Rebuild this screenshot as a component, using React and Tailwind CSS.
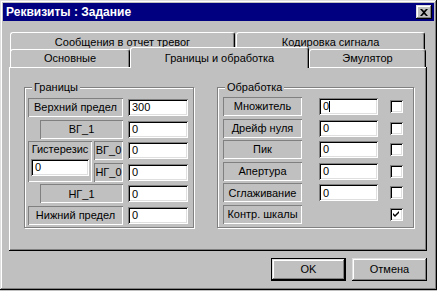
import React from "react";

const FONT = { fontFamily: '"Liberation Sans", Arial, sans-serif' };

const RAISED =
  "shadow-[inset_-1px_-1px_#000,inset_1px_1px_#dfdfdf,inset_-2px_-2px_#808080,inset_2px_2px_#fff]";
const FIELD =
  "shadow-[inset_1px_1px_#808080,inset_-1px_-1px_#fff,inset_2px_2px_#000,inset_-2px_-2px_#dfdfdf]";
const STATIC = "shadow-[inset_1px_1px_#808080,inset_-1px_-1px_#fff]";

function Label({ w, children }) {
  return (
    <div
      className={`${STATIC} h-[19px] shrink-0 flex items-center justify-center text-[11px] text-black`}
      style={{ width: w }}
    >
      {children}
    </div>
  );
}

function Field({ w = 60, value, caret }) {
  return (
    <div
      className={`${FIELD} h-[17px] shrink-0 bg-white flex items-center pl-[4px] text-[11px] text-black`}
      style={{ width: w }}
    >
      {value}
      {caret && <span className="inline-block w-px h-[11px] bg-black" />}
    </div>
  );
}

function Check({ on }) {
  return (
    <div className={`${FIELD} w-[13px] h-[13px] shrink-0 bg-white flex items-center justify-center`}>
      {on && (
        <svg width="7" height="7" viewBox="0 0 7 7">
          <path d="M0 2 L2 4 L6 0 L6 2 L2 6 L0 4 Z" fill="#000" />
        </svg>
      )}
    </div>
  );
}

function Group({ title, w, pl, children }) {
  return (
    <div
      className="relative h-[141px] border border-[#808080] shadow-[inset_1px_1px_#fff,1px_1px_#fff]"
      style={{ width: w, paddingLeft: pl }}
    >
      <span className="absolute -top-[7px] left-[7px] bg-[#c0c0c0] px-[2px] text-[11px] leading-[13px] text-black">
        {title}
      </span>
      {children}
    </div>
  );
}

function Tab({ w, h = 18, children, active }) {
  return (
    <div
      className={`shrink-0 border-t border-l border-white border-r border-r-black rounded-t-[3px] shadow-[inset_-1px_0_#808080] bg-[#c0c0c0] flex items-center justify-center text-[11px] text-black ${
        active ? "relative top-[1px] z-10" : ""
      }`}
      style={{ width: w, height: h }}
    >
      {children}
    </div>
  );
}

const rightRows = [
  ["Множитель", true],
  ["Дрейф нуля"],
  ["Пик"],
  ["Апертура"],
  ["Сглаживание"],
];

export default function App() {
  return (
    <div style={FONT} className="w-[437px] h-[291px] bg-[#c0c0c0] overflow-hidden">
      <div className={`${RAISED} w-[437px] h-[290px] p-[3px] flex flex-col`}>
        <div className="h-[18px] bg-[#000080] flex items-center justify-between pl-[3px] pr-[2px]">
          <span className="text-white font-bold text-[12px]">Реквизиты : Задание</span>
          <div className={`${RAISED} w-[16px] h-[14px] bg-[#c0c0c0] flex items-center justify-center`}>
            <svg width="8" height="7" viewBox="0 0 8 7">
              <path d="M0 0h2l2 2 2-2h2L5 3.5 8 7H6L4 5 2 7H0l3-3.5z" fill="#000" />
            </svg>
          </div>
        </div>

        <div className="pl-[6px] pr-[7px] mt-[11px] flex flex-col">
          <div className="flex gap-px pl-px">
            <Tab w={225} h={19}>Сообщения в отчет тревог</Tab>
            <Tab w={189} h={19}>Кодировка сигнала</Tab>
          </div>
          <div className="flex items-end h-[20px] -mt-[4px] pl-px">
            <Tab w={120}>Основные</Tab>
            <Tab w={179} h={21} active>
              Границы и обработка
            </Tab>
            <Tab w={117}>Эмулятор</Tab>
          </div>

          <div className="h-[184px] w-[418px] shadow-[inset_-1px_-1px_#000,inset_1px_1px_#fff,inset_-2px_-2px_#808080] pl-[15px] pt-[20px] flex gap-[23px]">
            <Group title="Границы" w={170} pl={3}>
              <div className="pt-[10px] flex flex-col gap-[2.6px]">
                <div className="flex items-center gap-[5px]">
                  <Label w={95}>Верхний предел</Label>
                  <Field value="300" />
                </div>
                <div className="flex items-center gap-[5px] pl-[12px]">
                  <Label w={83}>ВГ_1</Label>
                  <Field value="0" />
                </div>
                <div className="flex gap-[2px]">
                  <div className={`${STATIC} w-[64px] h-[40.6px] flex flex-col items-center pt-[2px]`}>
                    <span className="text-[11px] leading-[13px] text-black">Гистерезис</span>
                    <div className="mt-[3px]">
                      <Field w={58} value="0" />
                    </div>
                  </div>
                  <div className="flex flex-col gap-[2.6px]">
                    <div className="flex items-center gap-[5px]">
                      <Label w={29}>ВГ_0</Label>
                      <Field value="0" />
                    </div>
                    <div className="flex items-center gap-[5px]">
                      <Label w={29}>НГ_0</Label>
                      <Field value="0" />
                    </div>
                  </div>
                </div>
                <div className="flex items-center gap-[5px] pl-[12px]">
                  <Label w={83}>НГ_1</Label>
                  <Field value="0" />
                </div>
                <div className="flex items-center gap-[5px]">
                  <Label w={95}>Нижний предел</Label>
                  <Field value="0" />
                </div>
              </div>
            </Group>

            <Group title="Обработка" w={197} pl={5}>
              <div className="pt-[9px] flex flex-col gap-[2.6px]">
                {rightRows.map(([name, caret]) => (
                  <div key={name} className="flex items-center">
                    <Label w={79}>{name}</Label>
                    <div className="ml-[17px]">
                      <Field w={59} value="0" caret={caret} />
                    </div>
                    <div className="ml-[12px]">
                      <Check />
                    </div>
                  </div>
                ))}
                <div className="flex items-center">
                  <Label w={79}>Контр. шкалы</Label>
                  <div className="ml-[88px]">
                    <Check on />
                  </div>
                </div>
              </div>
            </Group>
          </div>

          <div className="flex justify-end gap-[6px] mt-[7px]">
            <div className="w-[75px] h-[23px] border border-black">
              <div className={`${RAISED} w-full h-full bg-[#c0c0c0] flex items-center justify-center text-[11px] text-black`}>
                OK
              </div>
            </div>
            <div className={`${RAISED} w-[75px] h-[23px] bg-[#c0c0c0] flex items-center justify-center text-[11px] text-black`}>
              Отмена
            </div>
          </div>
        </div>
      </div>
    </div>
  );
}
